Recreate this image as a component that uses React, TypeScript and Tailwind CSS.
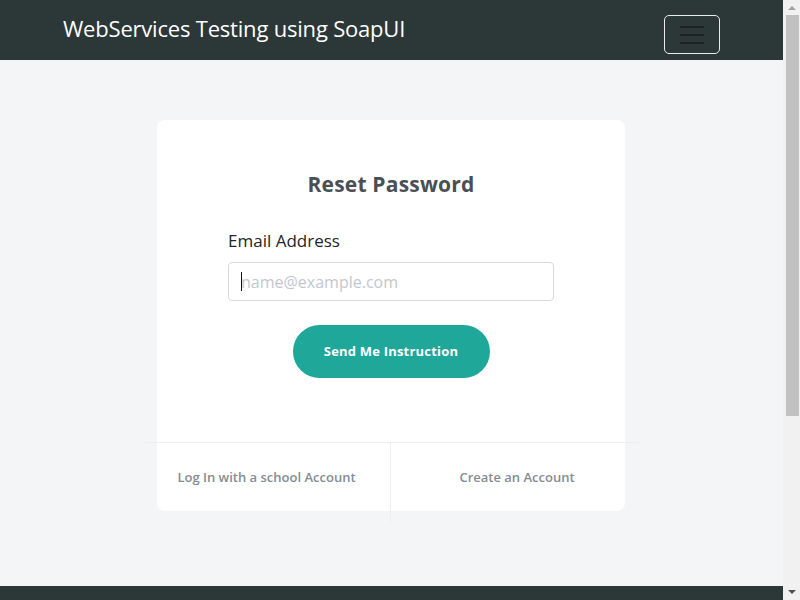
export default function App() {
  return (
    <div className="h-screen flex overflow-hidden font-['Open_Sans',sans-serif]">
      <div className="w-[783px] h-full overflow-hidden bg-[#f4f5f7]">
        {/* Top bar */}
        <nav className="h-[60px] bg-[#2c3738] flex items-start justify-between px-[63px] pt-[13px]">
          <span className="text-white text-[22px] leading-[30px] tracking-[-0.2px]">WebServices Testing using SoapUI</span>
          <button className="mt-[2px] w-[56px] h-[39px] border border-[#e8ecec] rounded-[5px] flex flex-col items-center justify-center gap-[6px]">
            <span className="block w-[24px] h-[2px] bg-[#1a2222]" />
            <span className="block w-[24px] h-[2px] bg-[#1a2222]" />
            <span className="block w-[24px] h-[2px] bg-[#1a2222]" />
          </button>
        </nav>

        <main className="pt-[60px] pb-[75px] flex justify-center">
          <div className="w-[468px] bg-white rounded-[8px] -ml-[1px]">
            <div className="px-[71px] pt-[50px] pb-[64px]">
              <h2 className="text-center text-[21px] font-bold text-[#4a4f55] leading-[28px] tracking-[0.2px]">Reset Password</h2>
              <label className="block mt-[31px] text-[17px] text-[#212529] leading-[24px]">Email Address</label>
              <div className="relative mt-[9px]">
                <input
                  type="email"
                  placeholder="name@example.com"
                  className="w-full h-[39px] border border-[#d7dadd] rounded-[4px] px-[12px] text-[16px] placeholder:text-[#c3c7cd] outline-none"
                />
                {/* text caret */}
                <span className="absolute left-[13px] top-[10px] w-[1px] h-[19px] bg-[#111]" />
              </div>
              <div className="mt-[24px] flex justify-center">
                <button className="w-[197px] h-[53px] rounded-full bg-[#1fa79a] text-white text-[13px] font-bold tracking-[0.2px]">
                  Send Me Instruction
                </button>
              </div>
            </div>
            <div className="mx-[-14px] grid grid-cols-2 border-t border-[#eceef0]">
              <div className="h-[79px] pb-[10px] -mb-[11px] flex items-center justify-center border-r border-[#eceef0] text-[13px] font-semibold text-[#858c96]">
                Log In with a school Account
              </div>
              <div className="h-[68px] pt-[1px] flex items-center justify-center text-[13px] font-semibold text-[#858c96] pl-[4px]">
                Create an Account
              </div>
            </div>
          </div>
        </main>

        <footer className="h-[264px] bg-[#2c3738]" />
      </div>

      {/* scrollbar */}
      <div className="w-[17px] h-full bg-[#f1f1f1] flex flex-col items-center">
        <div className="h-[15px] flex items-center justify-center">
          <span className="block w-0 h-0 border-l-[4px] border-r-[4px] border-b-[4px] border-l-transparent border-r-transparent border-b-[#a3a3a3]" />
        </div>
        <div className="w-[13px] h-[401px] bg-[#c1c1c1] ml-[1px]" />
        <div className="flex-1" />
        <div className="h-[17px] flex items-center justify-center">
          <span className="block w-0 h-0 border-l-[4px] border-r-[4px] border-t-[4px] border-l-transparent border-r-transparent border-t-[#505050]" />
        </div>
      </div>
    </div>
  );
}
